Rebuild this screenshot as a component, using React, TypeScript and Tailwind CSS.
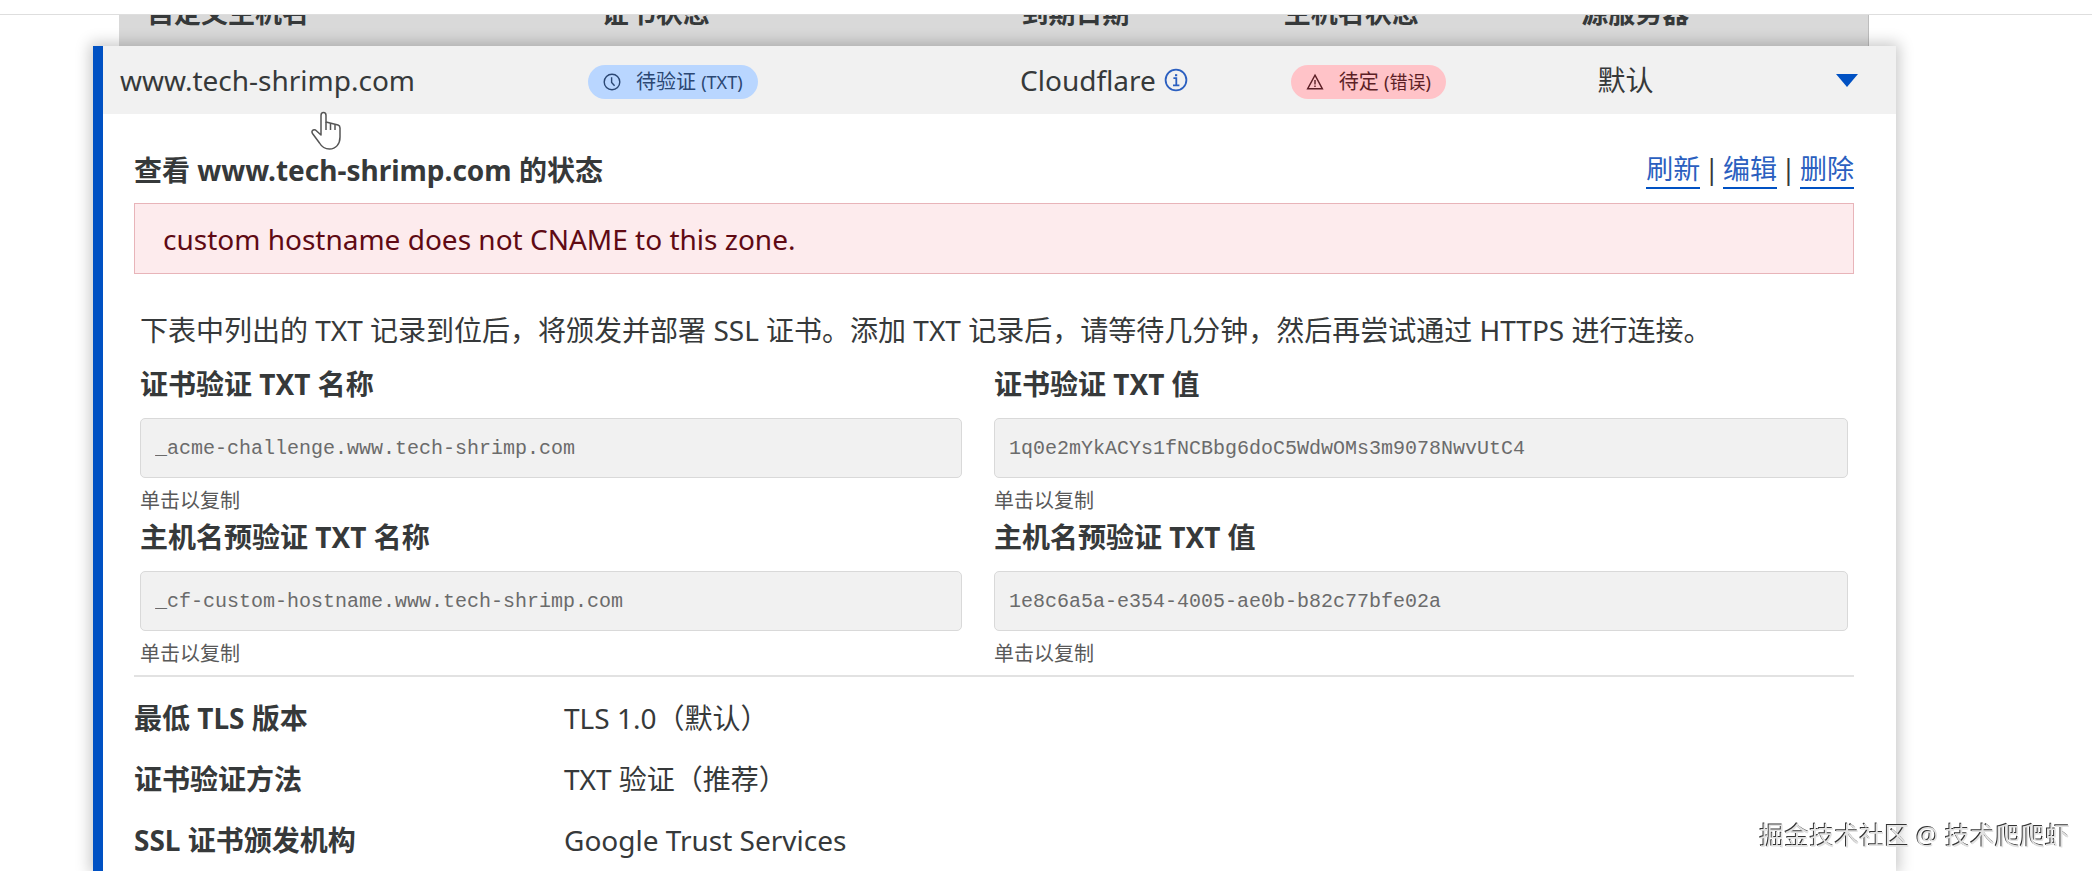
import type { ReactNode } from "react";

const headers = ["自定义主机名", "证书状态", "到期日期", "主机名状态", "源服务器"];

const records = [
  { id: "cert-name", label: "证书验证 TXT 名称", value: "_acme-challenge.www.tech-shrimp.com" },
  { id: "cert-value", label: "证书验证 TXT 值", value: "1q0e2mYkACYs1fNCBbg6doC5WdwOMs3m9078NwvUtC4" },
  { id: "host-name", label: "主机名预验证 TXT 名称", value: "_cf-custom-hostname.www.tech-shrimp.com" },
  { id: "host-value", label: "主机名预验证 TXT 值", value: "1e8c6a5a-e354-4005-ae0b-b82c77bfe02a" },
];

const settings = [
  { name: "最低 TLS 版本", value: "TLS 1.0（默认）" },
  { name: "证书验证方法", value: "TXT 验证（推荐）" },
  { name: "SSL 证书颁发机构", value: "Google Trust Services" },
];

function ClockIcon() {
  return (
    <svg className="size-[18px]" viewBox="0 0 18 18" fill="none" stroke="currentColor" strokeWidth="1.4">
      <circle cx="9" cy="9" r="7.8" />
      <path d="M8.6 4.2v5.2l3 3.4" />
    </svg>
  );
}

function WarningIcon() {
  return (
    <svg className="size-[18px]" viewBox="0 0 18 18" fill="none" stroke="currentColor" strokeWidth="1.4">
      <path d="M9 2.2 16.4 15.8H1.6Z" />
      <path d="M9 7v4.4M9 12.6v1.5" />
    </svg>
  );
}

function InfoIcon() {
  return (
    <svg className="size-6" viewBox="0 0 24 24" fill="none" stroke="currentColor" strokeWidth="1.8">
      <circle cx="12" cy="12" r="10.4" />
      <path d="M9.4 10.2h2.9v7M9 17.3h6.4" />
      <path d="M11 6.2h2.2v2H11z" fill="currentColor" stroke="none" />
    </svg>
  );
}

function Badge({ icon, className, children }: { icon: ReactNode; className: string; children: ReactNode }) {
  return (
    <span className={`inline-flex h-[34px] items-center rounded-full px-[15px] text-xl ${className}`}>
      {icon}
      <span className="ml-[15px]">{children}</span>
    </span>
  );
}

function TableHeader() {
  return (
    <div className="ml-[26px] mr-[27px] flex h-[31px] items-end overflow-hidden border-r border-[#bdbdbd] bg-[#d9d9d9]">
      <table className="mb-[15px] w-full table-fixed text-left text-[27px]">
        <colgroup>
          <col className="w-[26%]" />
          <col className="w-[24%]" />
          <col className="w-[15%]" />
          <col className="w-[17%]" />
          <col />
        </colgroup>
        <thead>
          <tr>
            {headers.map((header) => (
              <th key={header} className="pl-[28px] font-bold">
                {header}
              </th>
            ))}
          </tr>
        </thead>
      </table>
    </div>
  );
}

function HostnameRow() {
  return (
    <table className="w-full table-fixed bg-[#f1f1f1]">
      <colgroup>
        <col className="w-[26.1%]" />
        <col className="w-[24.1%]" />
        <col className="w-[15.1%]" />
        <col className="w-[17.1%]" />
        <col />
      </colgroup>
      <tbody>
        <tr className="h-[68px]">
          <td className="pl-[17px]">www.tech-shrimp.com</td>
          <td className="pl-[17px]">
            <Badge icon={<ClockIcon />} className="bg-[#b9d6ff] text-[#2b4773]">
              待验证 <span className="text-lg">(TXT)</span>
            </Badge>
          </td>
          <td className="pl-[17px]">
            <span className="flex items-center gap-2">
              Cloudflare
              <button type="button" aria-label="Cloudflare" className="text-[#2b5fc0]">
                <InfoIcon />
              </button>
            </span>
          </td>
          <td className="pl-[17px]">
            <Badge icon={<WarningIcon />} className="bg-[#ffc3c8] text-[#5c1f26]">
              待定 <span className="text-lg">(错误)</span>
            </Badge>
          </td>
          <td className="pl-[17px] pr-[38px]">
            <span className="flex items-center justify-between">
              默认
              <button type="button" aria-label="默认" aria-expanded="true" className="text-[#0051c3]">
                <svg className="h-[13px] w-[22px]" viewBox="0 0 22 13" fill="currentColor">
                  <path d="M0 0h22L11 13z" />
                </svg>
              </button>
            </span>
          </td>
        </tr>
      </tbody>
    </table>
  );
}

function ActionLink({ children }: { children: ReactNode }) {
  return (
    <a href="#" className="border-b-2 border-[#0051c3] text-[#2b5fc0]">
      {children}
    </a>
  );
}

function TxtRecord({ id, label, value }: { id: string; label: string; value: string }) {
  return (
    <div>
      <label htmlFor={id} className="block font-bold">
        {label}
      </label>
      <input
        id={id}
        readOnly
        value={value}
        className="mt-4 block h-[60px] w-full rounded-[5px] border border-[#d9d9d9] bg-[#f1f1f1] px-[14px] font-['Liberation_Mono',monospace] text-xl text-[#6b6b6b]"
      />
      <p className="mt-2 text-xl leading-[30px] text-[#595959]">单击以复制</p>
    </div>
  );
}

function HostnameDetails() {
  return (
    <div className="pl-[31px] pr-[42px] pt-[37px]">
      <div className="flex items-center justify-between">
        <h2 className="font-bold">查看 www.tech-shrimp.com 的状态</h2>
        <div className="flex gap-1 text-[27px]">
          <ActionLink>刷新</ActionLink>
          <span>|</span>
          <ActionLink>编辑</ActionLink>
          <span>|</span>
          <ActionLink>删除</ActionLink>
        </div>
      </div>

      <div role="alert" className="mt-[14px] flex h-[71px] items-center border border-[#e8b4b9] bg-[#fdebed] px-7 text-[#5f0a14]">
        custom hostname does not CNAME to this zone.
      </div>

      <div className="border-b-2 border-[#e2e2e2] px-[6px] pb-[6px] pt-[38px]">
        <p>下表中列出的 TXT 记录到位后，将颁发并部署 SSL 证书。添加 TXT 记录后，请等待几分钟，然后再尝试通过 HTTPS 进行连接。</p>
        <div className="mt-[18px] grid grid-cols-[821fr_853fr] gap-x-8 gap-y-[3px]">
          {records.map((record) => (
            <TxtRecord key={record.id} {...record} />
          ))}
        </div>
      </div>

      <dl className="pt-[10px]">
        {settings.map((setting) => (
          <div key={setting.name} className="flex h-[61px] items-center">
            <dt className="w-1/4 font-bold">{setting.name}</dt>
            <dd>{setting.value}</dd>
          </div>
        ))}
      </dl>
    </div>
  );
}

export default function App() {
  return (
    <div className="flex min-h-screen flex-col bg-white font-['Noto_Sans','Noto_Sans_CJK_SC',sans-serif] text-[28px] leading-9 text-[#36393a]">
      <div className="h-[15px] border-b border-[#dedede]" />
      <main className="flex flex-1 flex-col pl-[93px] pr-[196px]">
        <TableHeader />
        <section className="flex-1 border-l-[10px] border-[#0051c3] bg-white shadow-[0_0_14px_3px_rgba(0,0,0,0.22)]">
          <HostnameRow />
          <HostnameDetails />
        </section>
      </main>

      <div className="fixed bottom-[18px] right-[22px] text-[25px] text-[#e2e2e2] [text-shadow:-1px_-1px_0_#333]">
        掘金技术社区 @ 技术爬爬虾
      </div>

      {/* Hand pointer resting on the row */}
      <svg className="pointer-events-none absolute left-[311px] top-[111px] h-[39px] w-[30px]" viewBox="0 0 30 39" fill="#fff" stroke="#555" strokeWidth="1.5" strokeLinejoin="round">
        <path d="M10 24V4.500c0-4 5-4 5 0V11l12 3c1.500.5 2 1.500 2 3v9c0 7-4 12-10.500 12-5 0-8-2.500-10-6L1.500 22.500c-1.500-2.500.5-4.500 3-3.500Z" />
        <path d="M15 11v8M19.500 12v7M24 13.500V19" fill="none" />
      </svg>
    </div>
  );
}
